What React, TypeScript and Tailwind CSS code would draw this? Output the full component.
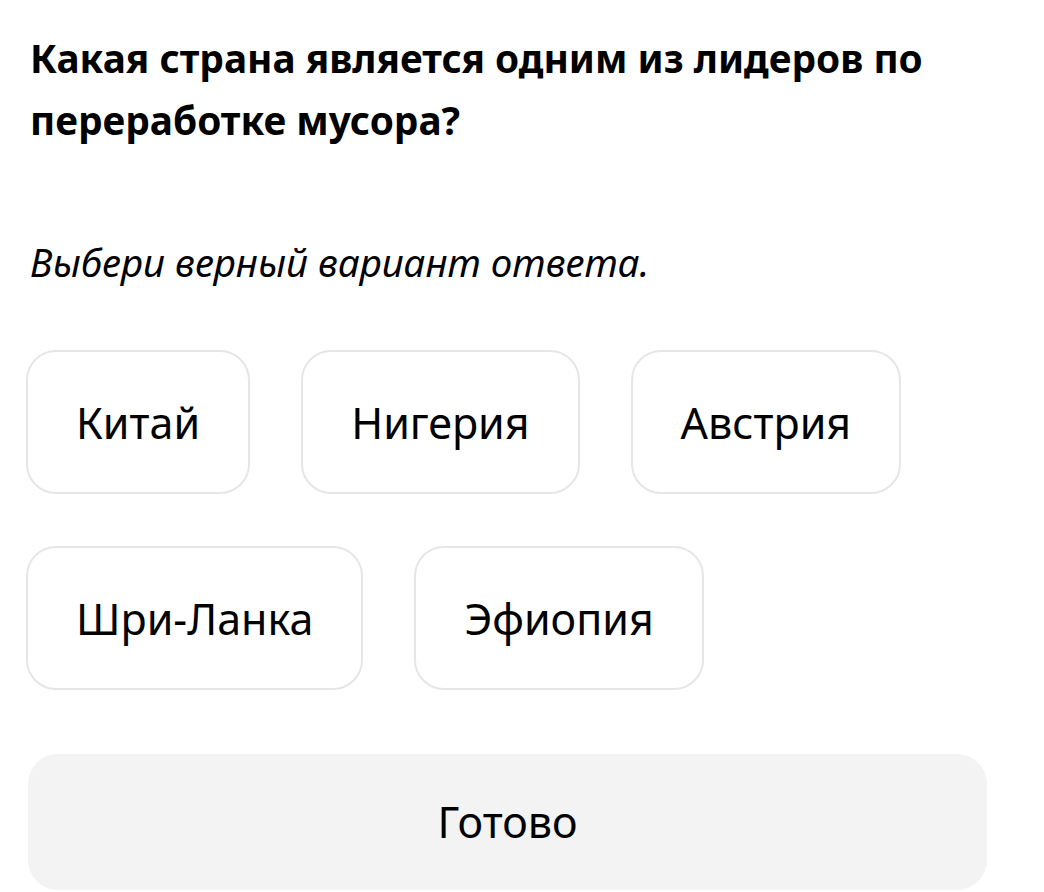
import React from "react";

const options = [["Китай", "Нигерия", "Австрия"], ["Шри-Ланка", "Эфиопия"]];

export default function App() {
  return (
    <div
      className="min-h-[892px] w-[1044px] bg-white text-black"
      style={{ fontFamily: '"Noto Sans", "Open Sans", sans-serif' }}
    >
      <div className="pl-[30px] pr-[40px] pt-[27px]">
        <h1 className="text-[38.8px] font-bold leading-[62px] w-[990px]">
          Какая страна является одним из лидеров по переработке мусора?
        </h1>
        <p className="mt-[87px] text-[38.5px] italic leading-[48px]">
          Выбери верный вариант ответа.
        </p>
        <div className="mt-[64px] ml-[-4px] flex flex-col gap-[52px]">
          {options.map((row, i) => (
            <div key={i} className="flex gap-[51px]">
              {row.map((o) => (
                <button
                  key={o}
                  className="h-[144px] rounded-[30px] border-[2px] border-[#e6e6e6] px-[48px] text-[43px] leading-none"
                >
                  {o}
                </button>
              ))}
            </div>
          ))}
        </div>
        <button className="mt-[64px] ml-[-2px] flex h-[136px] w-[959px] items-center justify-center rounded-[30px] bg-[#f3f3f3] text-[43px]">
          Готово
        </button>
      </div>
    </div>
  );
}
